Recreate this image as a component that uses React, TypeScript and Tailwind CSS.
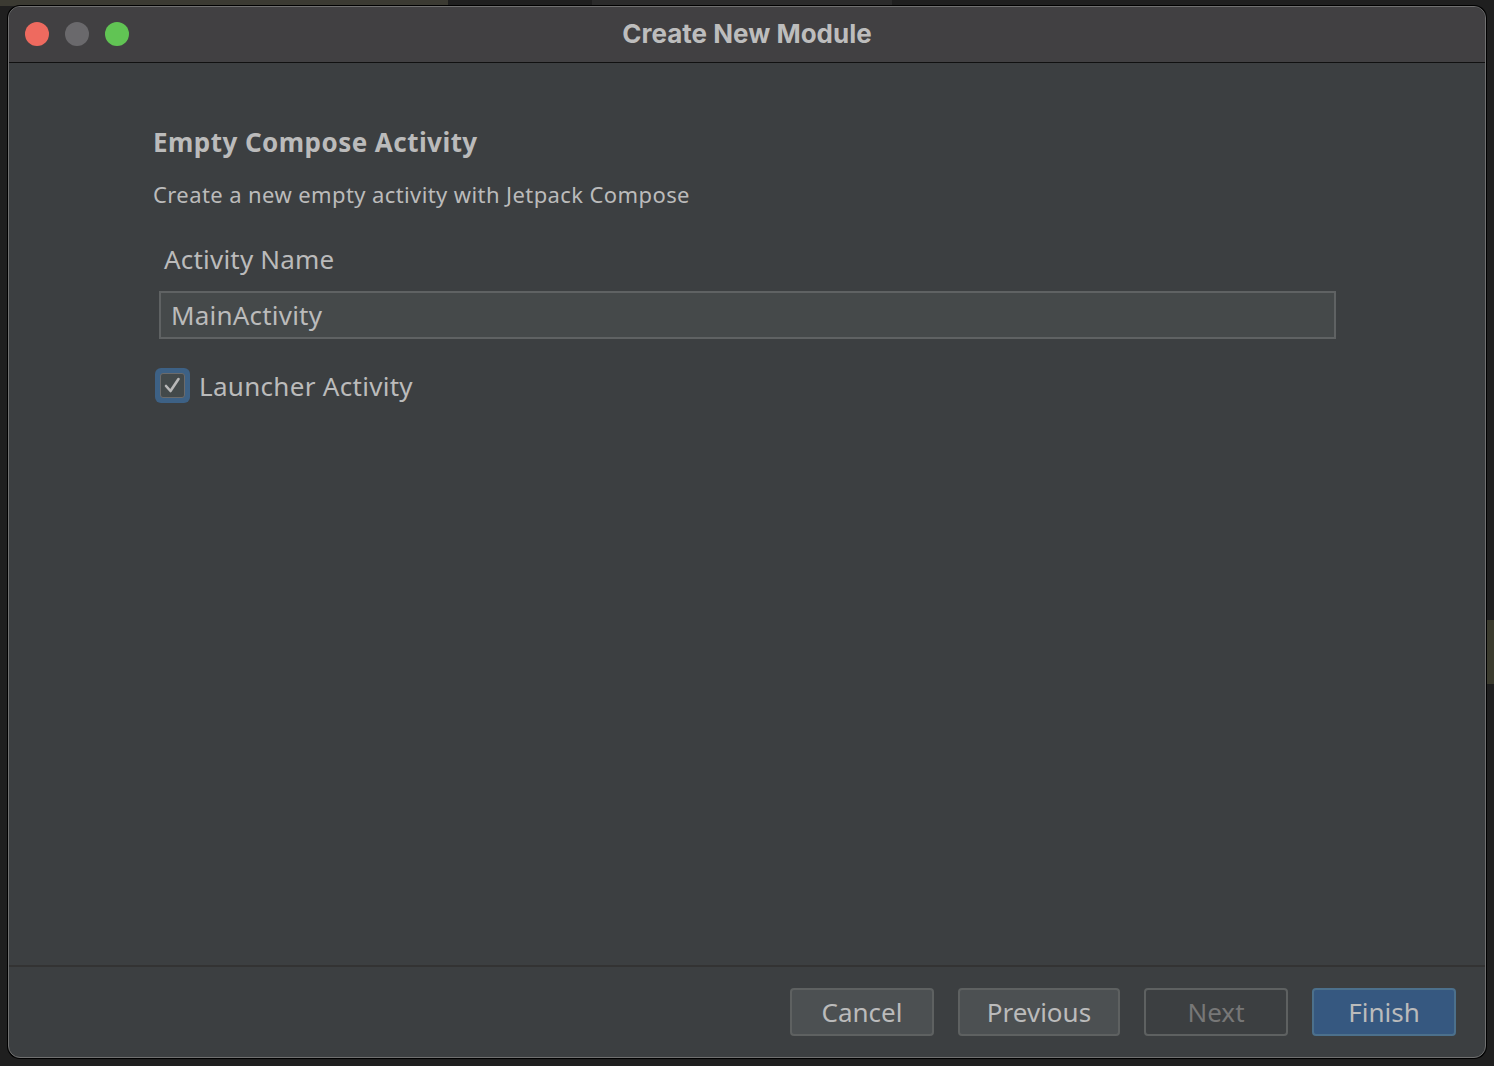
const BUTTONS = [
  { label: "Cancel", w: "w-[144px]", cls: "bg-[#4c5052] border-[#5e6161] text-[#bbbbbb]" },
  { label: "Previous", w: "w-[162px]", cls: "bg-[#4c5052] border-[#5e6161] text-[#bbbbbb]" },
  { label: "Next", w: "w-[144px]", cls: "bg-[#3c3f41] border-[#5e6161] text-[#777777]" },
  { label: "Finish", w: "w-[144px]", cls: "bg-[#365880] border-[#4c708c] text-[#bbbbbb]" },
];

function TrafficLights() {
  return (
    <div className="absolute left-[16px] top-[15px] flex gap-[16px]">
      <div className="h-[24px] w-[24px] rounded-full bg-[#ee6a5f]" />
      <div className="h-[24px] w-[24px] rounded-full bg-[#6a696c]" />
      <div className="h-[24px] w-[24px] rounded-full bg-[#61c454]" />
    </div>
  );
}

function Checkbox() {
  return (
    <div className="flex h-[35px] w-[35px] items-center justify-center rounded-[6px] bg-[#3d6185]">
      <div className="flex h-[25px] w-[25px] items-center justify-center rounded-[3px] border border-[#6b6b6b] bg-[#43494a]">
        <svg width="21" height="21" viewBox="0 0 21 21">
          <path d="M4 11 L8.5 16 L16.5 4" fill="none" stroke="#b8b8b8" strokeWidth="2.6" strokeLinecap="round" strokeLinejoin="round" />
        </svg>
      </div>
    </div>
  );
}

export default function App() {
  return (
    <div className="relative h-[1066px] w-[1494px] overflow-hidden bg-[#1f1f1f]" style={{ fontFamily: '"Noto Sans", sans-serif' }}>
      {/* editor behind the dialog */}
      <div className="absolute left-0 top-0 h-[6px] w-[448px] bg-[#3b3a32]" />
      <div className="absolute left-[592px] top-0 h-[6px] w-[300px] bg-[#2b2b2b]" />
      <div className="absolute right-0 top-[620px] h-[64px] w-[10px] bg-[#3a3a2d]" />
      <div className="absolute left-[8px] top-[6px] flex h-[1052px] w-[1478px] flex-col overflow-hidden rounded-[12px] border border-[#707070] bg-[#3c3f41] shadow-[0_0_0_1px_#000]">
        <div className="relative flex h-[56px] shrink-0 items-center justify-center border-b border-[#111111] bg-[#414042] pb-[3px]">
          <TrafficLights />
          <span className="text-[26px] font-bold text-[#bdbdbd]" style={{ fontFamily: '"Inter", "Liberation Sans", sans-serif' }}>
            Create New Module
          </span>
        </div>
        <div className="flex flex-1 flex-col pl-[144px] pr-[149px] pt-[63px]">
          <h1 className="text-[26px] font-bold leading-[32px] tracking-[0.45px] text-[#bbbbbb]">Empty Compose Activity</h1>
          <p className="mt-[22px] text-[22px] leading-[28px] tracking-[0.4px] text-[#bbbbbb]">Create a new empty activity with Jetpack Compose</p>
          <label className="ml-[11px] mt-[34px] text-[26px] leading-[34px] tracking-[0.2px] text-[#bbbbbb]">Activity Name</label>
          <div className="ml-[6px] mt-[15px] flex h-[48px] items-center border-2 border-[#5f6263] bg-[#45494a] px-[10px] text-[26px] tracking-[0.2px] text-[#bbbbbb]">
            MainActivity
          </div>
          <div className="ml-[2px] mt-[29px] flex items-center gap-[9px]">
            <Checkbox />
            <span className="text-[26px] leading-[34px] tracking-[0.3px] text-[#bbbbbb]">Launcher Activity</span>
          </div>
        </div>
        <div className="flex h-[92px] shrink-0 items-center justify-end gap-[24px] border-t-2 border-[#333333] pr-[29px]">
          {BUTTONS.map((b) => (
            <div
              key={b.label}
              className={`flex h-[48px] items-center justify-center rounded-[4px] border-2 text-[26px] ${b.w} ${b.cls}`}
            >
              {b.label}
            </div>
          ))}
        </div>
      </div>
    </div>
  );
}
